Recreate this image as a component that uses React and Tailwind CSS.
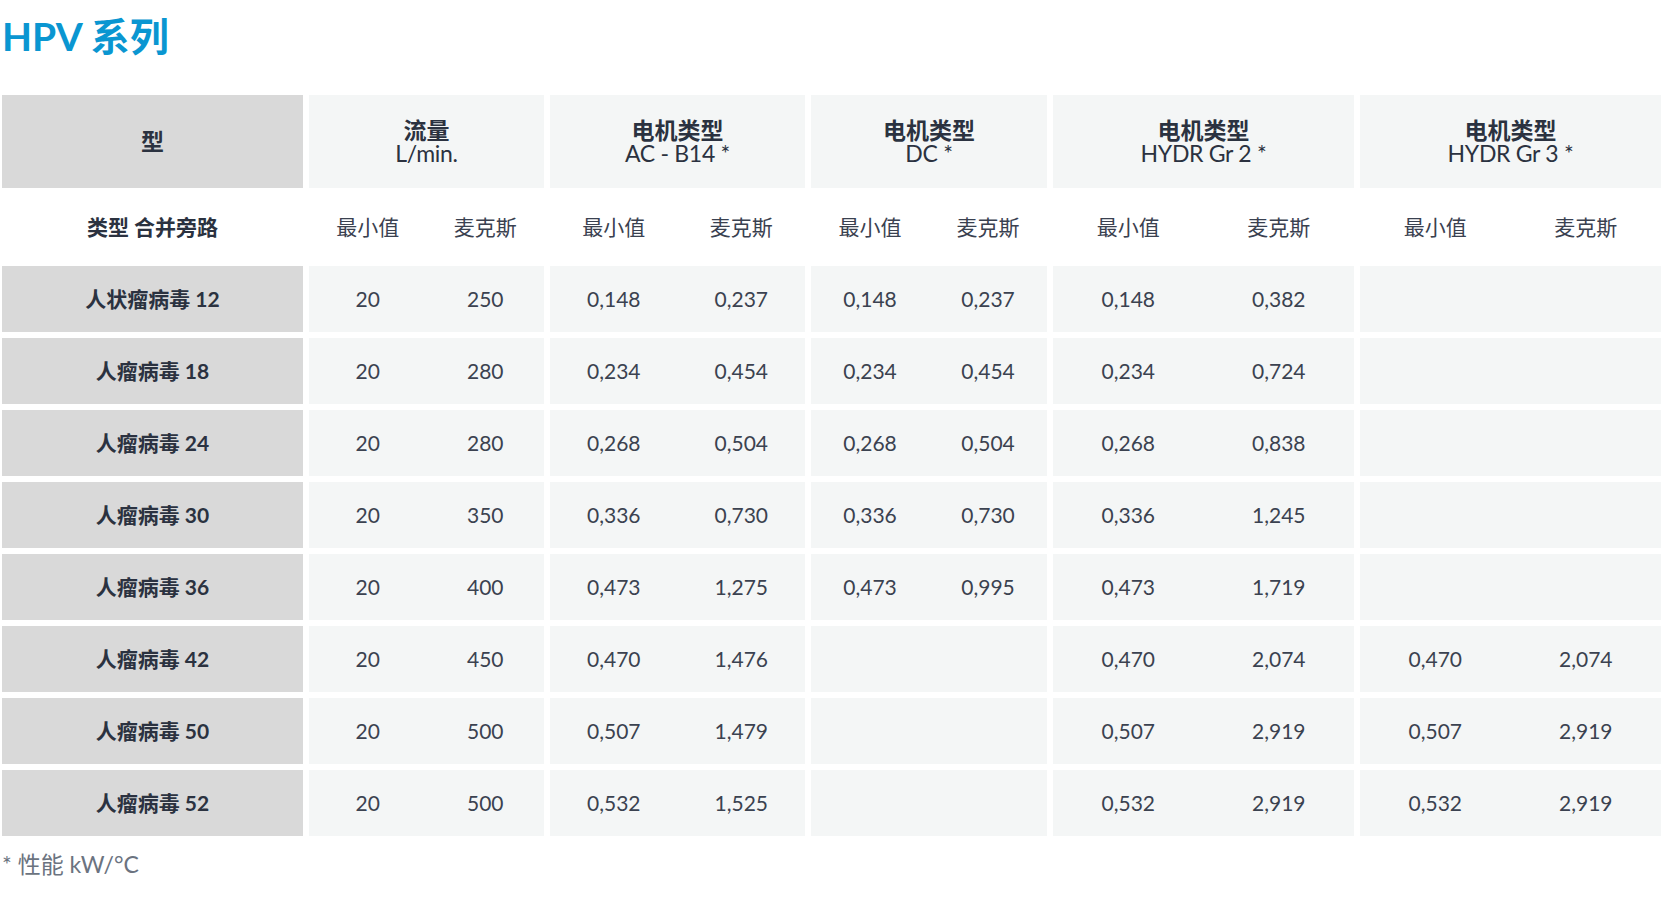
const groups = [
  { title: '流量', sub: 'L/min.' },
  { title: '电机类型', sub: 'AC - B14 *' },
  { title: '电机类型', sub: 'DC *' },
  { title: '电机类型', sub: 'HYDR Gr 2 *' },
  { title: '电机类型', sub: 'HYDR Gr 3 *' },
];

const rows = [
  ['人状瘤病毒 12', ['20', '250'], ['0,148', '0,237'], ['0,148', '0,237'], ['0,148', '0,382'], ['', '']],
  ['人瘤病毒 18', ['20', '280'], ['0,234', '0,454'], ['0,234', '0,454'], ['0,234', '0,724'], ['', '']],
  ['人瘤病毒 24', ['20', '280'], ['0,268', '0,504'], ['0,268', '0,504'], ['0,268', '0,838'], ['', '']],
  ['人瘤病毒 30', ['20', '350'], ['0,336', '0,730'], ['0,336', '0,730'], ['0,336', '1,245'], ['', '']],
  ['人瘤病毒 36', ['20', '400'], ['0,473', '1,275'], ['0,473', '0,995'], ['0,473', '1,719'], ['', '']],
  ['人瘤病毒 42', ['20', '450'], ['0,470', '1,476'], ['', ''], ['0,470', '2,074'], ['0,470', '2,074']],
  ['人瘤病毒 50', ['20', '500'], ['0,507', '1,479'], ['', ''], ['0,507', '2,919'], ['0,507', '2,919']],
  ['人瘤病毒 52', ['20', '500'], ['0,532', '1,525'], ['', ''], ['0,532', '2,919'], ['0,532', '2,919']],
];

const cols = 'grid grid-cols-[301px_235px_255px_236px_301px_301px] gap-x-[6px]';

function Pair({ values, className }) {
  return (
    <div className={`flex items-center ${className}`}>
      <div className="flex-1 text-center">{values[0]}</div>
      <div className="flex-1 text-center">{values[1]}</div>
    </div>
  );
}

export default function App() {
  return (
    <div
      className="min-h-screen bg-white pl-[2px] text-[#2b3240]"
      style={{ fontFamily: 'Lato, "Noto Sans CJK SC", sans-serif' }}
    >
      <h1 className="pt-[12px] text-[39px] leading-[48px] font-bold text-[#0a96d1]">HPV 系列</h1>

      <div className="mt-[35px] flex flex-col gap-y-[6px]">
        {/* header */}
        <div className={`${cols} h-[93px]`}>
          <div className="flex items-center justify-center bg-[#d9d9d9] text-[23px] font-bold">型</div>
          {groups.map((g, i) => (
            <div key={i} className="flex flex-col items-center justify-center bg-[#f4f6f6] text-[23px] leading-[23px]">
              <span className="font-bold">{g.title}</span>
              <span className="tracking-[-0.3px]">{g.sub}</span>
            </div>
          ))}
        </div>

        {/* sub header */}
        <div className={`${cols} h-[66px] text-[21px]`}>
          <div className="flex items-center justify-center font-bold">类型 合并旁路</div>
          {groups.map((g, i) => (
            <Pair key={i} values={['最小值', '麦克斯']} className="text-[#3a4150]" />
          ))}
        </div>

        {rows.map((r) => (
          <div key={r[0]} className={`${cols} h-[66px] text-[21px]`}>
            <div className="flex items-center justify-center bg-[#d9d9d9] font-bold">{r[0]}</div>
            {r.slice(1).map((v, i) => (
              <Pair key={i} values={v} className="bg-[#f4f6f6] text-[#3b4250]" />
            ))}
          </div>
        ))}
      </div>

      <p className="mt-[15px] text-[23px] leading-[27px] text-[#6b7380]">* 性能 kW/°C</p>
    </div>
  );
}
